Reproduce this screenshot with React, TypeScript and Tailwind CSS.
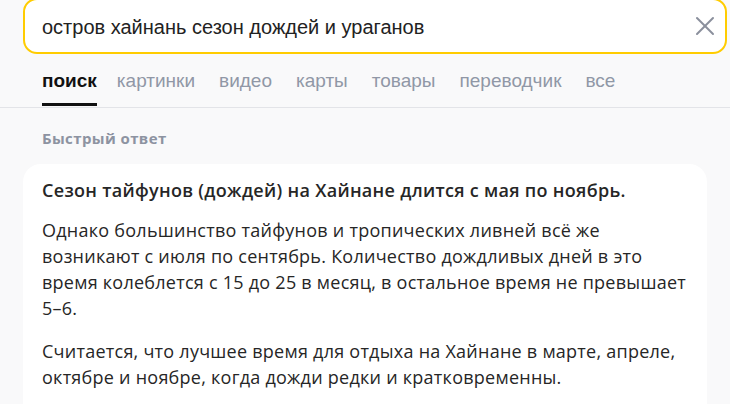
import { X } from "lucide-react";

const TABS = ["картинки", "видео", "карты", "товары", "переводчик", "все"];

export default function App() {
  return (
    <div className="h-[404px] w-[730px] overflow-hidden bg-[#f9f9fa]">
      {/* Search bar */}
      <div className="pl-[23px] pr-[3px]">
        <div className="-mt-[2px] flex h-[56px] items-center justify-between rounded-[14px] border-2 border-[#ffcc00] bg-white pl-[17px] pr-[4px]">
          <span className="pt-[1px] text-[20px] text-[#222] [font-family:'Liberation_Sans',Arial,sans-serif]">
            остров хайнань сезон дождей и ураганов
          </span>
          <X className="h-8 w-8 text-[#8a8f9c]" strokeWidth={1.5} />
        </div>
      </div>

      {/* Tabs */}
      <nav className="flex h-[54px] items-stretch gap-[24px] border-b border-[#e3e4e8] pl-[42px] text-[19px] [font-family:'Liberation_Sans',Arial,sans-serif]">
        <div className="relative -mr-[4px] flex items-center pt-[1px] font-bold text-[#111]">
          поиск
          <div className="absolute bottom-[1px] left-0 right-0 h-[3px] bg-[#111]" />
        </div>
        {TABS.map((t) => (
          <div key={t} className="flex items-center pt-[1px] text-[#9097a6]">
            {t}
          </div>
        ))}
      </nav>

      {/* Quick answer */}
      <div className="px-[23px] pt-[19px] [font-family:'Open_Sans',sans-serif]">
        <div className="pl-[19px] text-[15px] font-bold tracking-[0.4px] text-[#8d93a1]">Быстрый ответ</div>
        <div className="mt-[14px] rounded-[18px] bg-white pl-[19px] pr-[12px] pt-[13px] pb-16 text-[#262626]">
          <p className="text-[18px] font-semibold leading-[26px] tracking-[0.3px]">
            Сезон тайфунов (дождей) на Хайнане длится с мая по ноябрь.
          </p>
          <p className="mt-[14px] text-[18px] leading-[26.3px] tracking-[0.25px]">
            Однако большинство тайфунов и тропических ливней всё же возникают с июля по сентябрь. Количество дождливых дней в это время колеблется с 15 до 25 в месяц, в остальное время не превышает 5–6.
          </p>
          <p className="mt-[16px] text-[18px] leading-[26px] tracking-[0.25px]">
            Считается, что лучшее время для отдыха на Хайнане в марте, апреле, октябре и ноябре, когда дожди редки и кратковременны.
          </p>
        </div>
      </div>
    </div>
  );
}
